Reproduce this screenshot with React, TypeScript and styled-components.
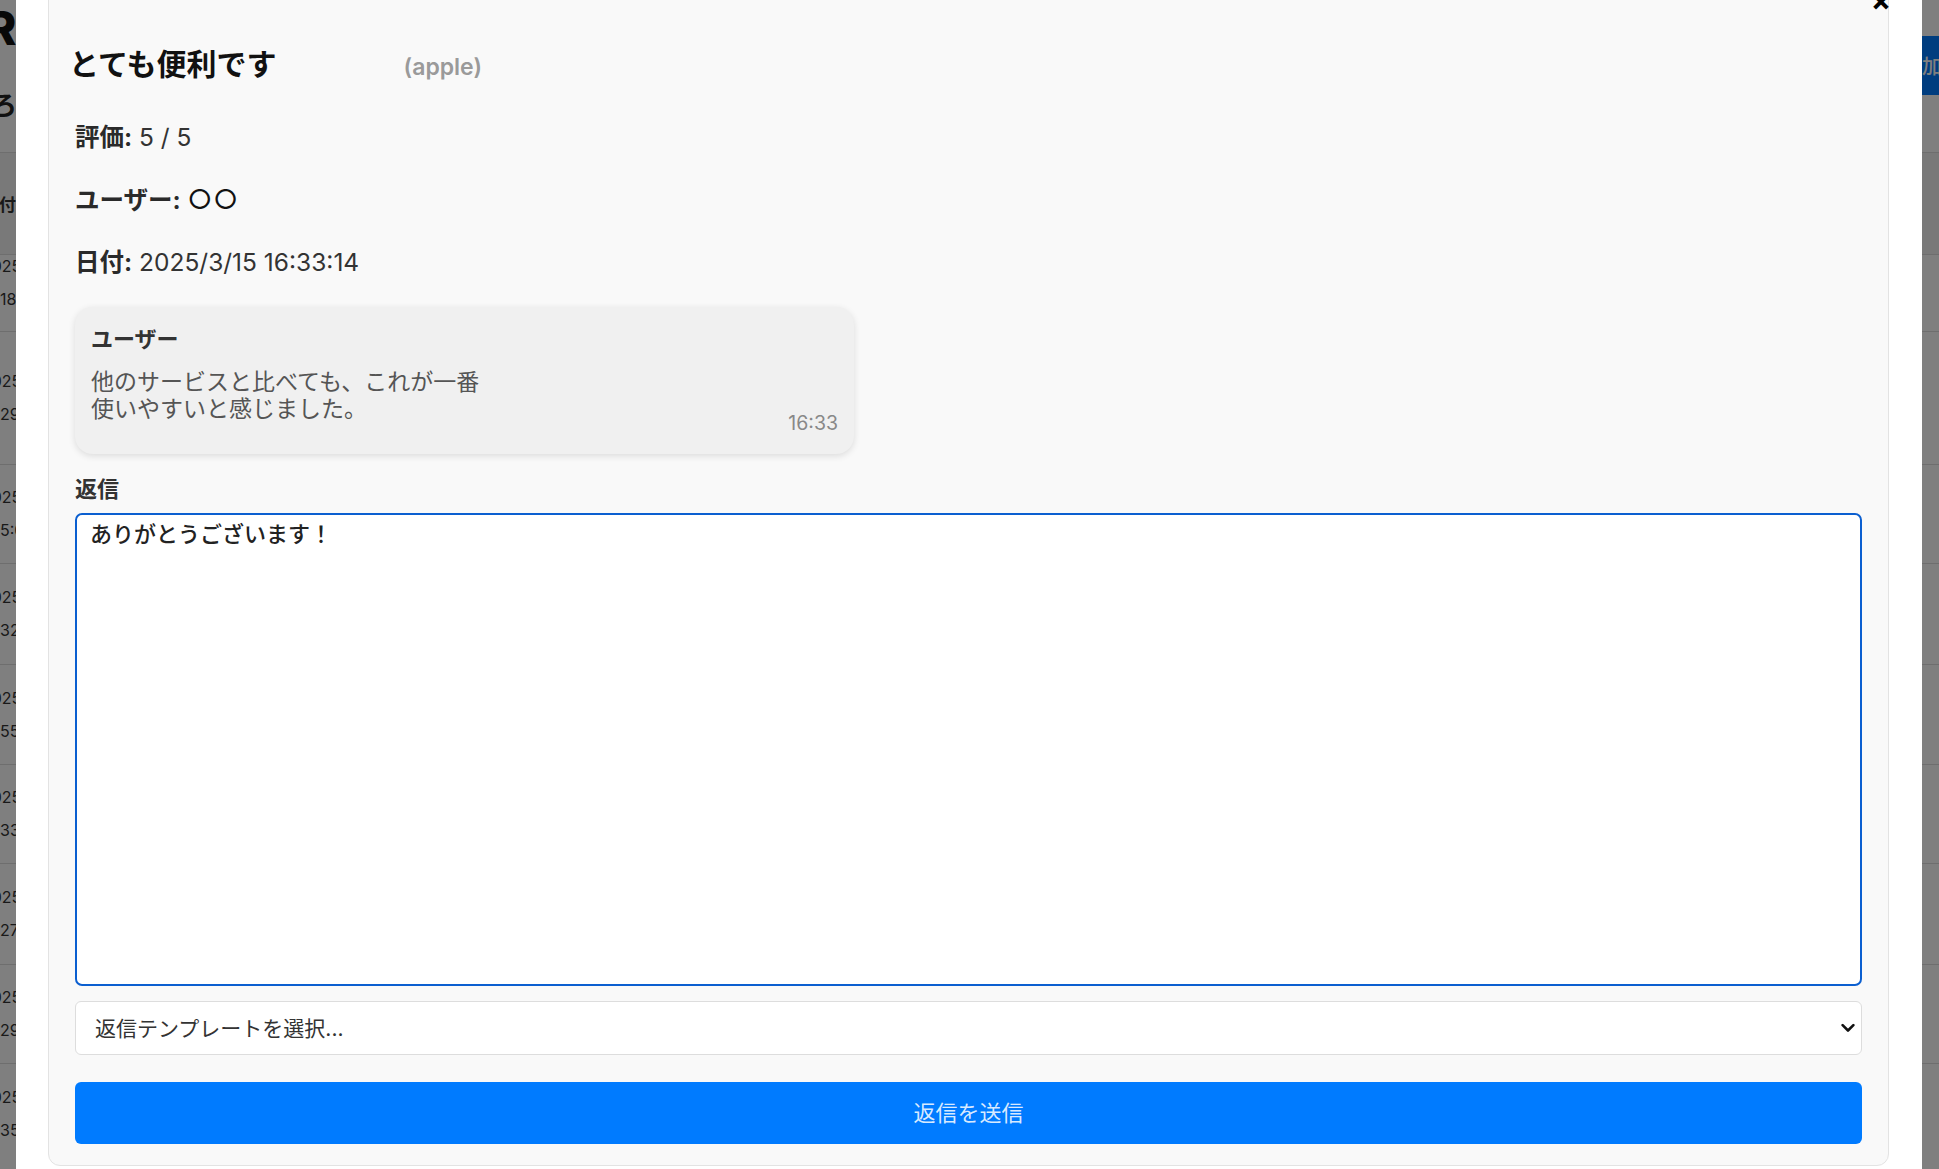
import React from "react";
import styled, { createGlobalStyle } from "styled-components";

const FONT = `Inter, "Noto Sans CJK JP", "Noto Sans", sans-serif`;

const GlobalStyle = createGlobalStyle`
  html, body { margin: 0; padding: 0; height: 100%; overflow: hidden; background: #fff; }
  body { font-family: ${FONT}; }
  * { box-sizing: border-box; }
`;

/* ---------- page behind the modal ---------- */
const Page = styled.div`
  margin-left: -18px;
  width: calc(100% + 51px);
  color: #333;
  background: #fff;
`;
const PageHeader = styled.header`
  height: 152px;
  display: flex;
  justify-content: space-between;
  align-items: flex-start;
`;
const Titles = styled.div`
  display: flex;
  flex-direction: column;
`;
const PageTitle = styled.h1`
  margin: 0 0 0 4px;
  font-size: 46px;
  line-height: 56px;
  font-weight: 800;
  color: #111;
`;
const PageSubtitle = styled.h2`
  margin: 30px 0 0 -17px;
  font-size: 26px;
  line-height: 40px;
  font-weight: 700;
  color: #222;
`;
const AddButton = styled.button`
  margin-top: 36px;
  height: 59px;
  padding: 0 30px 0 22px;
  border: 0;
  border-radius: 6px;
  background: #007bff;
  color: #fff;
  font: 500 20px ${FONT};
`;
const Table = styled.table`
  width: 100%;
  border-collapse: collapse;
  font-size: 16px;
`;
const HeadRow = styled.tr`
  height: 102px;
  background: #f2f2f2;
`;
const HeadCell = styled.th`
  border-top: 1px solid #ddd;
  padding: 0 12px 0 0;
  text-align: left;
  font-size: 17px;
  font-weight: 700;
`;
const Row = styled.tr<{ $h: number }>`
  height: ${(p) => p.$h}px;
`;
const Cell = styled.td<{ $lift?: number }>`
  border-top: 1px solid #ddd;
  padding: 0 12px ${(p) => p.$lift ?? 0}px 0;
  vertical-align: middle;
`;
const DateStack = styled.div`
  display: flex;
  flex-direction: column;
  gap: 12px;
  line-height: 21px;
`;
const TimeLine = styled.span`
  margin-left: 18px;
`;

/* ---------- modal ---------- */
const Overlay = styled.div`
  position: fixed;
  inset: 0;
  background: rgba(0, 0, 0, 0.5);
`;
const Modal = styled.div`
  position: absolute;
  left: 16px;
  right: 17px;
  top: -62px;
  bottom: -60px;
  background: #fff;
  padding: 32px 33px 0 32px;
`;
const Panel = styled.section`
  position: relative;
  display: flex;
  flex-direction: column;
  background: #f9f9f9;
  border: 1px solid #e3e3e3;
  border-radius: 12px;
  padding: 25px 26px 21px 26px;
`;
const CloseButton = styled.button`
  position: absolute;
  top: 14px;
  right: -3px;
  border: 0;
  padding: 0;
  background: transparent;
  font: 700 30px/30px ${FONT};
  color: #000;
`;
const TitleRow = styled.div`
  display: flex;
  align-items: baseline;
  margin: 48px 0 0 -6px;
`;
const Title = styled.h3`
  margin: 0;
  font-size: 30px;
  line-height: 40px;
  font-weight: 600;
  color: #111;
`;
const Source = styled.span`
  margin-left: 127px;
  font-size: 23px;
  font-weight: 600;
  color: #9a9a9a;
`;
const InfoList = styled.div`
  display: flex;
  flex-direction: column;
  gap: 30.5px;
  margin-top: 37px;
`;
const InfoLine = styled.p`
  margin: 0;
  font-size: 24.5px;
  line-height: 32px;
  color: #333;
  strong { font-weight: 700; color: #2a2a2a; }
`;
const Mark = styled.span`
  font-size: 27px;
  letter-spacing: 1px;
  color: #111;
`;
const Bubble = styled.div`
  margin-top: 29px;
  width: 779px;
  padding: 17px 16px 19px;
  border-radius: 18px;
  background: #f0f0f0;
  box-shadow: 0 2px 7px rgba(0, 0, 0, 0.12);
`;
const BubbleLabel = styled.div`
  font-size: 22px;
  line-height: 30px;
  font-weight: 700;
  color: #333;
`;
const BubbleText = styled.div`
  margin-top: 15px;
  font-size: 23px;
  line-height: 26.5px;
  color: #555;
  white-space: pre-line;
`;
const BubbleTime = styled.div`
  margin-top: -11px;
  text-align: right;
  font-size: 19.5px;
  line-height: 24px;
  color: #888;
`;
const FieldLabel = styled.label`
  margin-top: 20px;
  font-size: 22px;
  line-height: 30px;
  font-weight: 700;
  color: #333;
`;
const ReplyArea = styled.textarea`
  margin-top: 9px;
  width: 100%;
  height: 473px;
  padding: 7px 13px;
  border: 2px solid #0b5fd0;
  border-radius: 7px;
  background: #fff;
  resize: none;
  outline: none;
  font: 500 22px/24px ${FONT};
  color: #222;
`;
const SelectWrap = styled.div`
  position: relative;
  margin-top: 15px;
`;
const TemplateSelect = styled.select`
  width: 100%;
  height: 54px;
  appearance: none;
  border: 1px solid #ddd;
  border-radius: 6px;
  background: #fff;
  padding: 0 40px 0 19px;
  font: 400 21px ${FONT};
  color: #333;
`;
const Chevron = styled.svg`
  position: absolute;
  right: 7px;
  top: 50%;
  transform: translateY(-50%);
  pointer-events: none;
`;
const SendButton = styled.button`
  margin-top: 27px;
  height: 62px;
  padding: 0 0 4px;
  border: 0;
  border-radius: 6px;
  background: #007bff;
  color: rgba(255, 255, 255, 0.85);
  font: 400 22px ${FONT};
`;

const rows: { h: number; d: string; t: string; lift?: number }[] = [
  { h: 77, d: "2025/3/15", t: "18:42", lift: 21 },
  { h: 133, d: "2025/3/15", t: "29:10" },
  { h: 99, d: "2025/3/15", t: "5:03" },
  { h: 101, d: "2025/3/15", t: "32:47" },
  { h: 100, d: "2025/3/15", t: "55:21" },
  { h: 99, d: "2025/3/15", t: "33:14" },
  { h: 101, d: "2025/3/15", t: "27:09" },
  { h: 99, d: "2025/3/15", t: "29:36" },
  { h: 100, d: "2025/3/15", t: "35:58" },
];

export default function App() {
  return (
    <>
      <GlobalStyle />
      <Page>
        <PageHeader>
          <Titles>
            <PageTitle>Reviews</PageTitle>
            <PageSubtitle>いろいろなレビュー</PageSubtitle>
          </Titles>
          <AddButton>新規追加</AddButton>
        </PageHeader>
        <Table>
          <thead>
            <HeadRow>
              <HeadCell>日付</HeadCell>
              <HeadCell>タイトル</HeadCell>
              <HeadCell>評価</HeadCell>
              <HeadCell>ユーザー</HeadCell>
            </HeadRow>
          </thead>
          <tbody>
            {rows.map((r, i) => (
              <Row key={i} $h={r.h}>
                <Cell $lift={r.lift}>
                  <DateStack>
                    <span>{r.d}</span>
                    <TimeLine>{r.t}</TimeLine>
                  </DateStack>
                </Cell>
                <Cell $lift={r.lift}>とても便利です</Cell>
                <Cell $lift={r.lift}>5</Cell>
                <Cell $lift={r.lift}>○○</Cell>
              </Row>
            ))}
          </tbody>
        </Table>
      </Page>

      <Overlay>
        <Modal>
          <Panel>
            <CloseButton aria-label="閉じる">×</CloseButton>
            <TitleRow>
              <Title>とても便利です</Title>
              <Source>(apple)</Source>
            </TitleRow>
            <InfoList>
              <InfoLine>
                <strong>評価:</strong> 5 / 5
              </InfoLine>
              <InfoLine>
                <strong>ユーザー:</strong> <Mark>○○</Mark>
              </InfoLine>
              <InfoLine>
                <strong>日付:</strong> 2025/3/15 16:33:14
              </InfoLine>
            </InfoList>
            <Bubble>
              <BubbleLabel>ユーザー</BubbleLabel>
              <BubbleText>{"他のサービスと比べても、これが一番\n使いやすいと感じました。"}</BubbleText>
              <BubbleTime>16:33</BubbleTime>
            </Bubble>
            <FieldLabel htmlFor="reply">返信</FieldLabel>
            <ReplyArea id="reply" defaultValue="ありがとうございます！" />
            <SelectWrap>
              <TemplateSelect defaultValue="">
                <option value="">返信テンプレートを選択...</option>
                <option value="thanks">ありがとうございます！</option>
              </TemplateSelect>
              <Chevron width="14" height="9" viewBox="0 0 14 9" fill="none">
                <path d="M1.6 1.6 L7 7 L12.4 1.6" stroke="#111" strokeWidth="2.6" strokeLinecap="round" strokeLinejoin="round" />
              </Chevron>
            </SelectWrap>
            <SendButton>返信を送信</SendButton>
          </Panel>
        </Modal>
      </Overlay>
    </>
  );
}
